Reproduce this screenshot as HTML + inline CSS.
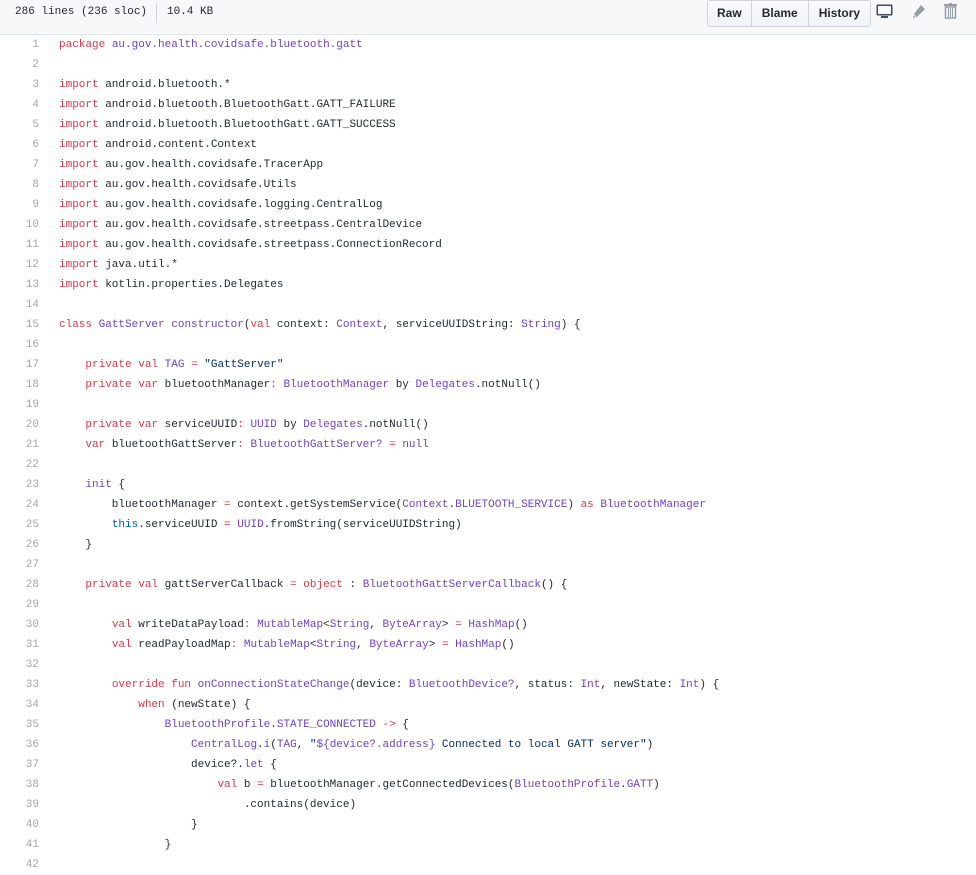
<!DOCTYPE html>
<html><head><meta charset="utf-8"><style>
html,body{margin:0;padding:0;background:#fff;width:976px;height:866px;overflow:hidden}
.hdr{position:absolute;left:0;top:0;width:976px;height:34px;background:#f6f8fa;border-bottom:1px solid #e1e4e8;font-family:"Liberation Mono",monospace;font-size:11px;color:#24292e}
.info{position:absolute;left:15px;top:5px;line-height:14px}
.sep{position:absolute;left:156px;top:3px;width:1px;height:20px;background:#d1d5da}
.kb{position:absolute;left:167px;top:5px;line-height:14px}
.btns{position:absolute;left:707px;top:0;height:25px;display:flex;border:1px solid #d1d5da;border-radius:3px;background:linear-gradient(#fafbfc,#eff3f6);font-family:"Liberation Sans",sans-serif;font-size:12px;font-weight:bold;color:#24292e}
.btns div{padding:0 10px;line-height:25px;border-left:1px solid #d1d5da}
.btns div:first-child{border-left:none}
.ic{position:absolute;top:3px}
.code{position:absolute;left:0;top:35px;width:976px;font-family:"Liberation Mono",monospace;font-size:11px;color:#24292e}
.l{position:relative;height:20px;line-height:20px;white-space:pre}
.n{position:absolute;left:0;width:39px;text-align:right;color:#a3a5a7}
.c{position:absolute;left:59px}
.k{color:#d73a49}.p{color:#6f42c1}.s{color:#032f62}.b{color:#005cc5}
</style></head><body>
<div class="hdr">
<div class="info">286 lines (236 sloc)</div><div class="sep"></div><div class="kb">10.4 KB</div>
<div class="btns"><div style="padding:0 9px">Raw</div><div>Blame</div><div>History</div></div>
<svg class="ic" style="left:876px;top:4px" width="17" height="15" viewBox="0 0 17 15"><rect x="0.5" y="0.5" width="16" height="11" fill="#444d56" rx="1"/><rect x="2" y="2" width="13" height="8" fill="#f6f8fa"/><rect x="5" y="12" width="7" height="2" fill="#444d56"/></svg>
<svg class="ic" style="left:910px;top:4px" width="16" height="16" viewBox="0 0 16 16"><path d="M11 1l4 4-8 8-4 1 1-4z" fill="#959da5"/><path d="M3 10l3 3" stroke="#f6f8fa" stroke-width="1"/></svg>
<svg class="ic" style="left:944px;top:3px" width="13" height="16" viewBox="0 0 13 16"><rect x="0" y="1" width="13" height="2" fill="#959da5"/><rect x="5" y="0" width="3" height="2" fill="#959da5"/><path d="M1.5 4h10v11h-10z" fill="none" stroke="#959da5" stroke-width="1.5"/><path d="M4.5 5v9M6.5 5v9M8.5 5v9" stroke="#959da5"/></svg>
</div>
<div class="code">
<div class="l"><span class="n">1</span><span class="c"><span class="k">package</span> <span class="p">au.gov.health.covidsafe.bluetooth.gatt</span></span></div>
<div class="l"><span class="n">2</span></div>
<div class="l"><span class="n">3</span><span class="c"><span class="k">import</span> android.bluetooth.*</span></div>
<div class="l"><span class="n">4</span><span class="c"><span class="k">import</span> android.bluetooth.BluetoothGatt.GATT_FAILURE</span></div>
<div class="l"><span class="n">5</span><span class="c"><span class="k">import</span> android.bluetooth.BluetoothGatt.GATT_SUCCESS</span></div>
<div class="l"><span class="n">6</span><span class="c"><span class="k">import</span> android.content.Context</span></div>
<div class="l"><span class="n">7</span><span class="c"><span class="k">import</span> au.gov.health.covidsafe.TracerApp</span></div>
<div class="l"><span class="n">8</span><span class="c"><span class="k">import</span> au.gov.health.covidsafe.Utils</span></div>
<div class="l"><span class="n">9</span><span class="c"><span class="k">import</span> au.gov.health.covidsafe.logging.CentralLog</span></div>
<div class="l"><span class="n">10</span><span class="c"><span class="k">import</span> au.gov.health.covidsafe.streetpass.CentralDevice</span></div>
<div class="l"><span class="n">11</span><span class="c"><span class="k">import</span> au.gov.health.covidsafe.streetpass.ConnectionRecord</span></div>
<div class="l"><span class="n">12</span><span class="c"><span class="k">import</span> java.util.*</span></div>
<div class="l"><span class="n">13</span><span class="c"><span class="k">import</span> kotlin.properties.Delegates</span></div>
<div class="l"><span class="n">14</span></div>
<div class="l"><span class="n">15</span><span class="c"><span class="k">class</span> <span class="p">GattServer</span> <span class="p">constructor</span>(<span class="k">val</span> context: <span class="p">Context</span>, serviceUUIDString: <span class="p">String</span>) {</span></div>
<div class="l"><span class="n">16</span></div>
<div class="l"><span class="n">17</span><span class="c">    <span class="k">private</span> <span class="k">val</span> <span class="p">TAG</span> <span class="k">=</span> <span class="s">"GattServer"</span></span></div>
<div class="l"><span class="n">18</span><span class="c">    <span class="k">private</span> <span class="k">var</span> bluetoothManager<span class="k">:</span> <span class="p">BluetoothManager</span> by <span class="p">Delegates</span>.notNull()</span></div>
<div class="l"><span class="n">19</span></div>
<div class="l"><span class="n">20</span><span class="c">    <span class="k">private</span> <span class="k">var</span> serviceUUID<span class="k">:</span> <span class="p">UUID</span> by <span class="p">Delegates</span>.notNull()</span></div>
<div class="l"><span class="n">21</span><span class="c">    <span class="k">var</span> bluetoothGattServer<span class="k">:</span> <span class="p">BluetoothGattServer?</span> <span class="k">=</span> <span class="p">null</span></span></div>
<div class="l"><span class="n">22</span></div>
<div class="l"><span class="n">23</span><span class="c">    <span class="p">init</span> {</span></div>
<div class="l"><span class="n">24</span><span class="c">        bluetoothManager <span class="k">=</span> context.getSystemService(<span class="p">Context</span>.<span class="p">BLUETOOTH_SERVICE</span>) <span class="k">as</span> <span class="p">BluetoothManager</span></span></div>
<div class="l"><span class="n">25</span><span class="c">        <span class="b">this</span>.serviceUUID <span class="k">=</span> <span class="p">UUID</span>.fromString(serviceUUIDString)</span></div>
<div class="l"><span class="n">26</span><span class="c">    }</span></div>
<div class="l"><span class="n">27</span></div>
<div class="l"><span class="n">28</span><span class="c">    <span class="k">private</span> <span class="k">val</span> gattServerCallback <span class="k">=</span> <span class="k">object</span> : <span class="p">BluetoothGattServerCallback</span>() {</span></div>
<div class="l"><span class="n">29</span></div>
<div class="l"><span class="n">30</span><span class="c">        <span class="k">val</span> writeDataPayload<span class="k">:</span> <span class="p">MutableMap</span>&lt;<span class="p">String</span>, <span class="p">ByteArray</span>&gt; <span class="k">=</span> <span class="p">HashMap</span>()</span></div>
<div class="l"><span class="n">31</span><span class="c">        <span class="k">val</span> readPayloadMap<span class="k">:</span> <span class="p">MutableMap</span>&lt;<span class="p">String</span>, <span class="p">ByteArray</span>&gt; <span class="k">=</span> <span class="p">HashMap</span>()</span></div>
<div class="l"><span class="n">32</span></div>
<div class="l"><span class="n">33</span><span class="c">        <span class="k">override</span> <span class="k">fun</span> <span class="p">onConnectionStateChange</span>(device: <span class="p">BluetoothDevice?</span>, status: <span class="p">Int</span>, newState: <span class="p">Int</span>) {</span></div>
<div class="l"><span class="n">34</span><span class="c">            <span class="k">when</span> (newState) {</span></div>
<div class="l"><span class="n">35</span><span class="c">                <span class="p">BluetoothProfile</span>.<span class="p">STATE_CONNECTED</span> <span class="k">-&gt;</span> {</span></div>
<div class="l"><span class="n">36</span><span class="c">                    <span class="p">CentralLog</span>.<span class="p">i</span>(<span class="p">TAG</span>, <span class="s">"</span><span class="p">${device?.address}</span><span class="s"> Connected to local GATT server"</span>)</span></div>
<div class="l"><span class="n">37</span><span class="c">                    device?.<span class="p">let</span> {</span></div>
<div class="l"><span class="n">38</span><span class="c">                        <span class="k">val</span> b <span class="k">=</span> bluetoothManager.getConnectedDevices(<span class="p">BluetoothProfile</span>.<span class="p">GATT</span>)</span></div>
<div class="l"><span class="n">39</span><span class="c">                            .contains(device)</span></div>
<div class="l"><span class="n">40</span><span class="c">                    }</span></div>
<div class="l"><span class="n">41</span><span class="c">                }</span></div>
<div class="l"><span class="n">42</span></div>
</div>
</body></html>
